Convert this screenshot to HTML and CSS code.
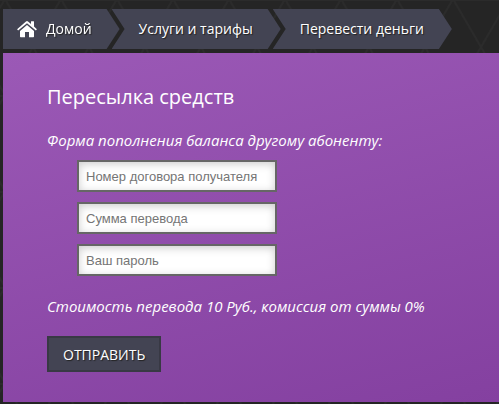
FILE: index.html
```
<!DOCTYPE html>
<html lang="ru">
<head>
<meta charset="utf-8">
<meta name="viewport" content="width=device-width, initial-scale=1">
<title>Пересылка средств</title>
<link rel="stylesheet" href="styles.css">
</head>
<body>
<svg class="backdrop" aria-hidden="true">
  <defs>
    <pattern id="mesh" width="56" height="96" patternUnits="userSpaceOnUse" x="453" y="-1">
      <path d="M0 0L28 48L56 0M0 96L28 48L56 96M0 1H56" fill="none" stroke="#2b2b2b" stroke-width="2"/>
    </pattern>
  </defs>
  <rect width="100%" height="100%" fill="url(#mesh)"/>
</svg>
<div class="page">
  <nav class="crumbs">
    <a class="crumb crumb-home" href="#">
      <svg class="home" viewBox="0 0 20 18" aria-hidden="true">
        <path d="M10 5L17 11v5.600q0 .7-.7.7H12v-5.200H8v5.200H3.700q-.7 0-.7-.7V11z"/>
        <path d="M.1 9.200L9 1.400q1-.8 2 0L14 4V1.600q0-.4.4-.4h2.200q.4 0 .4.4v5l2.900 2.600-1 1.200L10 3.300 1.100 10.400z"/>
      </svg>
      <span>Домой</span>
    </a>
    <a class="crumb" href="#">Услуги и тарифы</a>
    <a class="crumb" href="#">Перевести деньги</a>
  </nav>
  <main class="panel">
    <h1 class="title">Пересылка средств</h1>
    <form>
      <p class="note">Форма пополнения баланса другому абоненту:</p>
      <div class="fields">
        <input class="field" type="text" placeholder="Номер договора получателя" aria-label="Номер договора получателя">
        <input class="field" type="text" placeholder="Сумма перевода" aria-label="Сумма перевода">
        <input class="field" type="password" placeholder="Ваш пароль" aria-label="Ваш пароль">
      </div>
      <p class="note">Стоимость перевода 10 Руб., комиссия от суммы 0%</p>
      <button class="submit" type="button">ОТПРАВИТЬ</button>
    </form>
  </main>
</div>
</body>
</html>
```
FILE: styles.css
```
* {
  box-sizing: border-box;
}

body {
  margin: 0;
  background: #252525;
  color: #fff;
  font: 15px/20px "Open Sans", "Noto Sans", sans-serif;
}

.backdrop {
  position: fixed;
  inset: 0;
  width: 100%;
  height: 100%;
  z-index: -1;
}

.page {
  padding: 9px 0 2px 3px;
}

.crumbs {
  display: flex;
  margin-bottom: 4px;
}

.crumb {
  display: flex;
  align-items: center;
  height: 40px;
  padding: 0 28px 0 27px;
  background: #434453;
  color: #fff;
  font-size: 14px;
  text-decoration: none;
  white-space: nowrap;
  text-shadow: 1px 1px 1px #222;
  clip-path: polygon(0 0, calc(100% - 13px) 0, 100% 50%, calc(100% - 13px) 100%, 0 100%, 13px 50%);
}

.crumb + .crumb {
  margin-left: -8px;
}

.crumb-home {
  gap: 9px;
  padding-left: 14px;
  clip-path: polygon(0 0, calc(100% - 13px) 0, 100% 50%, calc(100% - 13px) 100%, 0 100%);
}

.home {
  width: 20px;
  height: 18px;
  fill: #fff;
}

.panel {
  padding: 30px 44px;
  background: linear-gradient(165deg, #9b59b6, #8440a0);
}

.title {
  margin: 0 0 19px;
  font-size: 20px;
  line-height: 28px;
  font-weight: 400;
}

.note {
  margin: 0;
  font-style: italic;
}

.fields {
  display: flex;
  flex-direction: column;
  align-items: flex-start;
  gap: 10px;
  padding: 10px 30px 20px;
}

.field {
  width: 200px;
  height: 32px;
  padding: 0 7px;
  border: 2px solid #666;
  border-radius: 0;
  background: #fff;
  box-shadow: inset 0 2px 8px #ccc;
  color: #333;
  font: 13px "Liberation Sans", Arial, sans-serif;
}

.field::placeholder {
  color: #757575;
}

.submit {
  height: 36px;
  margin-top: 20px;
  padding: 0 14px;
  border: 2px solid #383944;
  background: #434453;
  color: #fff;
  font: 14px "Open Sans", "Noto Sans", sans-serif;
  text-shadow: 1px 1px 1px #222;
}
```
